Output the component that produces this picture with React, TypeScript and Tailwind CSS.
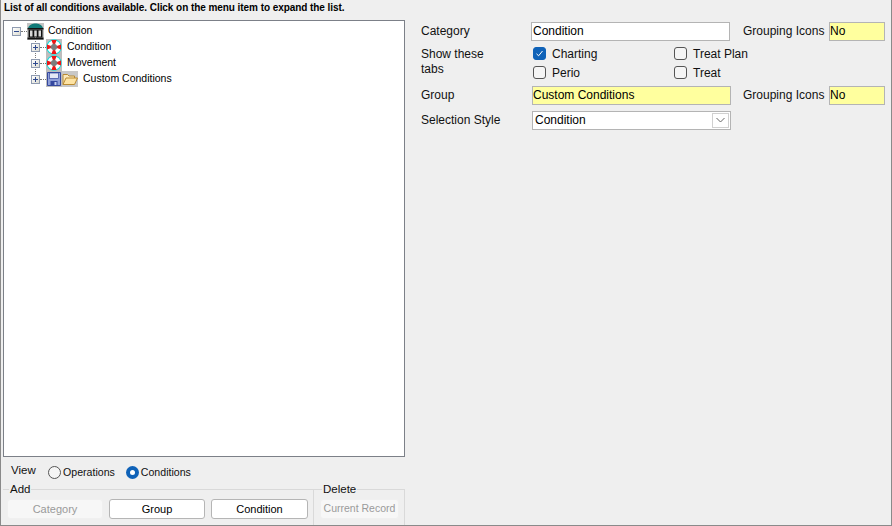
import React from "react";

function Lifebuoy() {
  return (
    <svg width="16" height="16" viewBox="0 0 16 16" className="shrink-0">
      <rect width="16" height="16" fill="#bdbdbd" />
      <circle cx="8" cy="8" r="7.2" fill="#fff" stroke="#1fdcdc" strokeWidth="1.2" />
      <path d="M8 8L5.4 1H10.6ZM8 8L15 5.4V10.6ZM8 8L10.6 15H5.4ZM8 8L1 10.6V5.4Z" fill="#f01414" />
      <path d="M8 4.2L11.8 8L8 11.8L4.2 8Z" fill="#7c7c7c" />
      <circle cx="8" cy="8" r="3" fill="#7c7c7c" />
    </svg>
  );
}

function Bank() {
  return (
    <svg width="17" height="17" viewBox="0 0 17 17" className="shrink-0">
      <rect width="17" height="17" fill="#c4c4c4" />
      <path d="M1 5C2.5 1.5 5.5 0.5 8.5 0.5S14.5 1.5 16 5Z" fill="#0f7a78" />
      <rect x="0.5" y="5" width="16" height="1.5" fill="#111" />
      <rect x="1.5" y="6.5" width="14" height="8" fill="#111" />
      <rect x="3" y="7.5" width="2.5" height="6" fill="#d8d8d8" />
      <rect x="7.25" y="7.5" width="2.5" height="6" fill="#d8d8d8" />
      <rect x="11.5" y="7.5" width="2.5" height="6" fill="#d8d8d8" />
      <rect x="0.5" y="14.5" width="16" height="2" fill="#111" />
    </svg>
  );
}

function Floppy() {
  return (
    <svg width="16" height="16" viewBox="0 0 16 16" className="shrink-0">
      <rect width="16" height="16" fill="#bdbdbd" />
      <path d="M1.5 1.5H14.5V14.5H1.5Z" fill="#8f9fd8" stroke="#34489f" />
      <rect x="3.5" y="2" width="9" height="5.5" fill="#e4e8f6" stroke="#34489f" strokeWidth="0.7" />
      <rect x="4.5" y="10" width="7" height="4.5" fill="#34489f" />
      <rect x="8.5" y="11" width="2" height="3" fill="#c6cfee" />
    </svg>
  );
}

function Folder() {
  return (
    <svg width="16" height="16" viewBox="0 0 16 16" className="shrink-0">
      <rect width="16" height="16" fill="#c8c8c8" />
      <path d="M1 13.5V3.5H5.5L7 5H12.5V7" fill="#fbe9bb" stroke="#b98a32" />
      <path d="M1 13.5L4 7H15.5L12.5 13.5Z" fill="#fde3a4" stroke="#b98a32" />
    </svg>
  );
}

function Expander({ minus = false }: { minus?: boolean }) {
  return (
    <span className="relative w-[9px] h-[9px] shrink-0 border border-[#8f9bb0] bg-gradient-to-br from-white to-[#dcdcd2]">
      <span className="absolute left-[1px] top-[3px] w-[5px] h-[1px] bg-[#2f4a8f]" />
      {!minus && <span className="absolute left-[3px] top-[1px] w-[1px] h-[5px] bg-[#2f4a8f]" />}
    </span>
  );
}

function Dots() {
  return <span className="w-[6px] h-0 border-t border-dotted border-[#777] shrink-0" />;
}

function TreeChild({ label, icons }: { label: string; icons: React.ReactNode }) {
  return (
    <div className="flex items-center h-4">
      <Expander />
      <Dots />
      <div className="flex items-center">{icons}</div>
      <span className="ml-[5px] text-[10.5px] text-[#000]">{label}</span>
    </div>
  );
}

function Check({ label, checked = false }: { label: string; checked?: boolean }) {
  return (
    <div className="flex items-center gap-[6px] h-[19px]">
      <span className={`w-[13px] h-[13px] rounded-[3px] border flex items-center justify-center ${checked ? "bg-[#0f62b8] border-[#0f62b8]" : "bg-[#f5f5f5] border-[#555]"}`}>
        {checked && (
          <svg width="9" height="9" viewBox="0 0 9 9">
            <path d="M1.5 4.8L3.6 6.8L7.5 2" fill="none" stroke="#fff" strokeWidth="1" />
          </svg>
        )}
      </span>
      <span>{label}</span>
    </div>
  );
}

function Radio({ label, checked = false }: { label: string; checked?: boolean }) {
  return (
    <div className="flex items-center gap-[2px]">
      {checked ? (
        <span className="w-[13px] h-[13px] rounded-full bg-[#0f62b8] flex items-center justify-center">
          <span className="w-[5px] h-[5px] rounded-full bg-white" />
        </span>
      ) : (
        <span className="w-[13px] h-[13px] rounded-full border border-[#555] bg-[#f5f5f5]" />
      )}
      <span>{label}</span>
    </div>
  );
}

function Btn({ label, width, disabled = false }: { label: string; width: string; disabled?: boolean }) {
  return (
    <div className={`${width} h-[20px] rounded-[3px] flex items-center justify-center border whitespace-nowrap ${disabled ? "bg-[#f7f7f7] border-[#f0f0f0] text-[#9a9a9a]" : "bg-white border-[#b5b5b5] text-black"}`}>
      {label}
    </div>
  );
}

function Yellow({ value, width }: { value: string; width: string }) {
  return (
    <div className={`${width} h-[19px] bg-[#ffff9e] border border-[#b4b4b4] flex items-center pb-[1px] text-black`}>
      {value}
    </div>
  );
}

export default function App() {
  return (
    <div
      className="w-[892px] h-[526px] bg-[#efefef] border-l border-r border-b border-[#8a8a8a] flex flex-col overflow-hidden text-[12px] text-[#111]"
      style={{ fontFamily: '"Liberation Sans", Arial, sans-serif' }}
    >
      <div className="h-[20px] pl-[3px] pt-[1px] shrink-0 font-bold text-[10px] tracking-[-0.06px] leading-[13px] text-black">
        List of all conditions available. Click on the menu item to expand the list.
      </div>
      <div className="flex flex-1 min-h-0">
        <div className="w-[404px] pl-[2px] shrink-0 flex flex-col">
          <div className="relative w-[402px] h-[437px] bg-white border border-[#7c8088] pl-[8px] pt-[2px] shrink-0">
            <span className="absolute left-[31px] top-[16px] h-[37px] w-0 border-l border-dotted border-[#777]" />
            <div className="flex items-center h-[16px]">
              <Expander minus />
              <Dots />
              <Bank />
              <span className="ml-[4px] text-[10.5px] text-black">Condition</span>
            </div>
            <div className="relative ml-[19px]">
              <TreeChild label="Condition" icons={<Lifebuoy />} />
              <TreeChild label="Movement" icons={<Lifebuoy />} />
              <TreeChild label="Custom Conditions" icons={<><Floppy /><Folder /></>} />
            </div>
          </div>
          <div className="flex items-center h-[32px] pl-[8px] gap-[11px] text-[10.6px] shrink-0">
            <span className="text-[11.5px] pb-[5px] w-[26px]">View</span>
            <div className="flex items-center gap-[11px]">
              <Radio label="Operations" />
              <Radio label="Conditions" checked />
            </div>
          </div>
          <div className="flex flex-1 min-h-0">
            <div className="relative w-[310px] border-t border-[#d9d9d9] flex items-start gap-[6px] pl-[4px] pt-[9px] text-[11px] shrink-0">
              <span className="absolute left-[6px] -top-[8px] bg-[#efefef] px-[1px] text-[11.5px] leading-[14px]">Add</span>
              <Btn label="Category" width="w-[96px]" disabled />
              <Btn label="Group" width="w-[96px]" />
              <Btn label="Condition" width="w-[97px]" />
            </div>
            <div className="relative w-[92px] border-t border-l border-r border-[#d9d9d9] pl-[6px] pt-[9px] text-[10.5px]">
              <span className="absolute left-[8px] -top-[8px] bg-[#efefef] px-[1px] text-[11.5px] leading-[14px]">Delete</span>
              <Btn label="Current Record" width="w-[79px]" disabled />
            </div>
          </div>
        </div>
        <div className="flex-1 pl-[16px] pt-[1px]">
          <div className="flex items-center h-[20px]">
            <span className="w-[110px]">Category</span>
            <div className="w-[199px] h-[19px] bg-white border border-[#b4b4b4] flex items-center pl-[1px] text-black">Condition</div>
            <span className="ml-[13px] w-[86px]">Grouping Icons</span>
            <Yellow value="No" width="w-[56px]" />
          </div>
          <div className="flex h-[39px] mt-[3px]">
            <span className="w-[110px] leading-[15px] pt-[3px]">Show these<br />tabs</span>
            <div className="w-[143px] pl-[2px]">
              <Check label="Charting" checked />
              <Check label="Perio" />
            </div>
            <div>
              <Check label="Treat Plan" />
              <Check label="Treat" />
            </div>
          </div>
          <div className="flex items-center h-[20px] mt-[2px]">
            <span className="w-[111px]">Group</span>
            <Yellow value="Custom Conditions" width="w-[199px]" />
            <span className="ml-[12px] w-[86px]">Grouping Icons</span>
            <Yellow value="No" width="w-[56px]" />
          </div>
          <div className="flex items-center h-[20px] mt-[5px]">
            <span className="w-[111px]">Selection Style</span>
            <div className="w-[199px] h-[19px] bg-white border border-[#b4b4b4] flex items-center justify-between pl-[2px] pr-[1px] text-black">
              <span>Condition</span>
              <span className="w-[17px] h-[15px] border border-[#d0d0d0] bg-white flex items-center justify-center">
                <svg width="9" height="6" viewBox="0 0 9 6">
                  <path d="M0.5 1L4.5 5L8.5 1" fill="none" stroke="#666" strokeWidth="1" />
                </svg>
              </span>
            </div>
          </div>
        </div>
      </div>
    </div>
  );
}
